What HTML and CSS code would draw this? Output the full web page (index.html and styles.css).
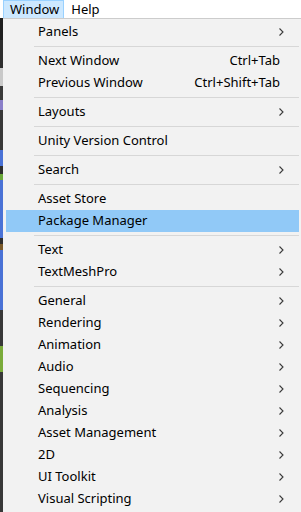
FILE: index.html
```html
<!DOCTYPE html>
<html>
<head>
    <link rel="stylesheet" href="styles.css">
</head>
<body>
    <div class="menubar">
        <span class="menubar-item active">Window</span>
        <span class="menubar-item">Help</span>
    </div>
    <div class="workspace">
        <div class="editor-strip"></div>
        <div class="menu">
            <div class="item"><span class="label">Panels</span><span class="arrow"><svg width="5" height="8" viewBox="0 0 5 8"><path d="M0.5 0.5 L4 4 L0.5 7.5" fill="none" stroke="#3a3a3a" stroke-width="1.1"/></svg></span></div>
            <div class="sep"></div>
            <div class="item"><span class="label">Next Window</span><span class="shortcut">Ctrl+Tab</span></div>
            <div class="item"><span class="label">Previous Window</span><span class="shortcut">Ctrl+Shift+Tab</span></div>
            <div class="sep"></div>
            <div class="item"><span class="label">Layouts</span><span class="arrow"><svg width="5" height="8" viewBox="0 0 5 8"><path d="M0.5 0.5 L4 4 L0.5 7.5" fill="none" stroke="#3a3a3a" stroke-width="1.1"/></svg></span></div>
            <div class="sep"></div>
            <div class="item"><span class="label">Unity Version Control</span></div>
            <div class="sep"></div>
            <div class="item"><span class="label">Search</span><span class="arrow"><svg width="5" height="8" viewBox="0 0 5 8"><path d="M0.5 0.5 L4 4 L0.5 7.5" fill="none" stroke="#3a3a3a" stroke-width="1.1"/></svg></span></div>
            <div class="sep"></div>
            <div class="item"><span class="label">Asset Store</span></div>
            <div class="item hover"><span class="label">Package Manager</span></div>
            <div class="sep"></div>
            <div class="item"><span class="label">Text</span><span class="arrow"><svg width="5" height="8" viewBox="0 0 5 8"><path d="M0.5 0.5 L4 4 L0.5 7.5" fill="none" stroke="#3a3a3a" stroke-width="1.1"/></svg></span></div>
            <div class="item"><span class="label">TextMeshPro</span><span class="arrow"><svg width="5" height="8" viewBox="0 0 5 8"><path d="M0.5 0.5 L4 4 L0.5 7.5" fill="none" stroke="#3a3a3a" stroke-width="1.1"/></svg></span></div>
            <div class="sep"></div>
            <div class="item"><span class="label">General</span><span class="arrow"><svg width="5" height="8" viewBox="0 0 5 8"><path d="M0.5 0.5 L4 4 L0.5 7.5" fill="none" stroke="#3a3a3a" stroke-width="1.1"/></svg></span></div>
            <div class="item"><span class="label">Rendering</span><span class="arrow"><svg width="5" height="8" viewBox="0 0 5 8"><path d="M0.5 0.5 L4 4 L0.5 7.5" fill="none" stroke="#3a3a3a" stroke-width="1.1"/></svg></span></div>
            <div class="item"><span class="label">Animation</span><span class="arrow"><svg width="5" height="8" viewBox="0 0 5 8"><path d="M0.5 0.5 L4 4 L0.5 7.5" fill="none" stroke="#3a3a3a" stroke-width="1.1"/></svg></span></div>
            <div class="item"><span class="label">Audio</span><span class="arrow"><svg width="5" height="8" viewBox="0 0 5 8"><path d="M0.5 0.5 L4 4 L0.5 7.5" fill="none" stroke="#3a3a3a" stroke-width="1.1"/></svg></span></div>
            <div class="item"><span class="label">Sequencing</span><span class="arrow"><svg width="5" height="8" viewBox="0 0 5 8"><path d="M0.5 0.5 L4 4 L0.5 7.5" fill="none" stroke="#3a3a3a" stroke-width="1.1"/></svg></span></div>
            <div class="item"><span class="label">Analysis</span><span class="arrow"><svg width="5" height="8" viewBox="0 0 5 8"><path d="M0.5 0.5 L4 4 L0.5 7.5" fill="none" stroke="#3a3a3a" stroke-width="1.1"/></svg></span></div>
            <div class="item"><span class="label">Asset Management</span><span class="arrow"><svg width="5" height="8" viewBox="0 0 5 8"><path d="M0.5 0.5 L4 4 L0.5 7.5" fill="none" stroke="#3a3a3a" stroke-width="1.1"/></svg></span></div>
            <div class="item"><span class="label">2D</span><span class="arrow"><svg width="5" height="8" viewBox="0 0 5 8"><path d="M0.5 0.5 L4 4 L0.5 7.5" fill="none" stroke="#3a3a3a" stroke-width="1.1"/></svg></span></div>
            <div class="item"><span class="label">UI Toolkit</span><span class="arrow"><svg width="5" height="8" viewBox="0 0 5 8"><path d="M0.5 0.5 L4 4 L0.5 7.5" fill="none" stroke="#3a3a3a" stroke-width="1.1"/></svg></span></div>
            <div class="item"><span class="label">Visual Scripting</span><span class="arrow"><svg width="5" height="8" viewBox="0 0 5 8"><path d="M0.5 0.5 L4 4 L0.5 7.5" fill="none" stroke="#3a3a3a" stroke-width="1.1"/></svg></span></div>
        </div>
    </div>
</body>
</html>
```

FILE: styles.css
```css
html, body {
    margin: 0;
    padding: 0;
    height: 100%;
    overflow: hidden;
}

body {
    font-family: "Noto Sans", "Open Sans", sans-serif;
    font-size: 13px;
    color: #000;
    background-color: #f2f2f2;
}

.menubar {
    display: flex;
    height: 18px;
    background-color: #fff;
}

.menubar-item {
    display: flex;
    align-items: center;
    padding: 0 4px 1px 6px;
    border: 1px solid transparent;
    border-bottom: none;
    line-height: 16px;
}

.menubar-item.active {
    margin-left: 3px;
    background-color: #cce8ff;
    border-color: #99d1ff;
}

.workspace {
    display: flex;
    height: calc(100% - 18px);
}

.editor-strip {
    width: 3px;
    flex-shrink: 0;
    background: linear-gradient(to bottom,
        #1e1e1e 0, #1e1e1e 22px,
        #2e2e2e 22px, #2e2e2e 50px,
        #c9c9c9 50px, #c9c9c9 68px,
        #3a3a3a 68px, #3a3a3a 82px,
        #8a7fc9 82px, #8a7fc9 92px,
        #383838 92px, #383838 132px,
        #4a72d6 132px, #4a72d6 148px,
        #2e2e2e 148px, #2e2e2e 156px,
        #6aa83a 156px, #6aa83a 162px,
        #4a72d6 162px, #4a72d6 220px,
        #2e2e2e 220px, #2e2e2e 226px,
        #7a5a2a 226px, #7a5a2a 232px,
        #4a72d6 232px, #4a72d6 292px,
        #383838 292px, #383838 328px,
        #7aab3a 328px, #7aab3a 354px,
        #383838 354px, #383838 100%);
}

.menu {
    flex: 1;
    border-top: 1px solid #ccc;
    padding: 2px 2px 0 3px;
    background-color: #f2f2f2;
}

.item {
    display: flex;
    align-items: center;
    height: 22px;
    padding-left: 32px;
    line-height: 20px;
}

.item .label,
.item .shortcut {
    position: relative;
    top: -1px;
}

.item.hover {
    background-color: #91c9f7;
}

.label {
    flex: 1;
    white-space: nowrap;
}

.shortcut {
    padding-right: 19px;
    white-space: nowrap;
}

.arrow {
    display: flex;
    width: 14px;
    padding-right: 6px;
    justify-content: flex-start;
}

.sep {
    height: 1px;
    margin: 3px 0 3px 28px;
    background-color: #d7d7d7;
}
```
